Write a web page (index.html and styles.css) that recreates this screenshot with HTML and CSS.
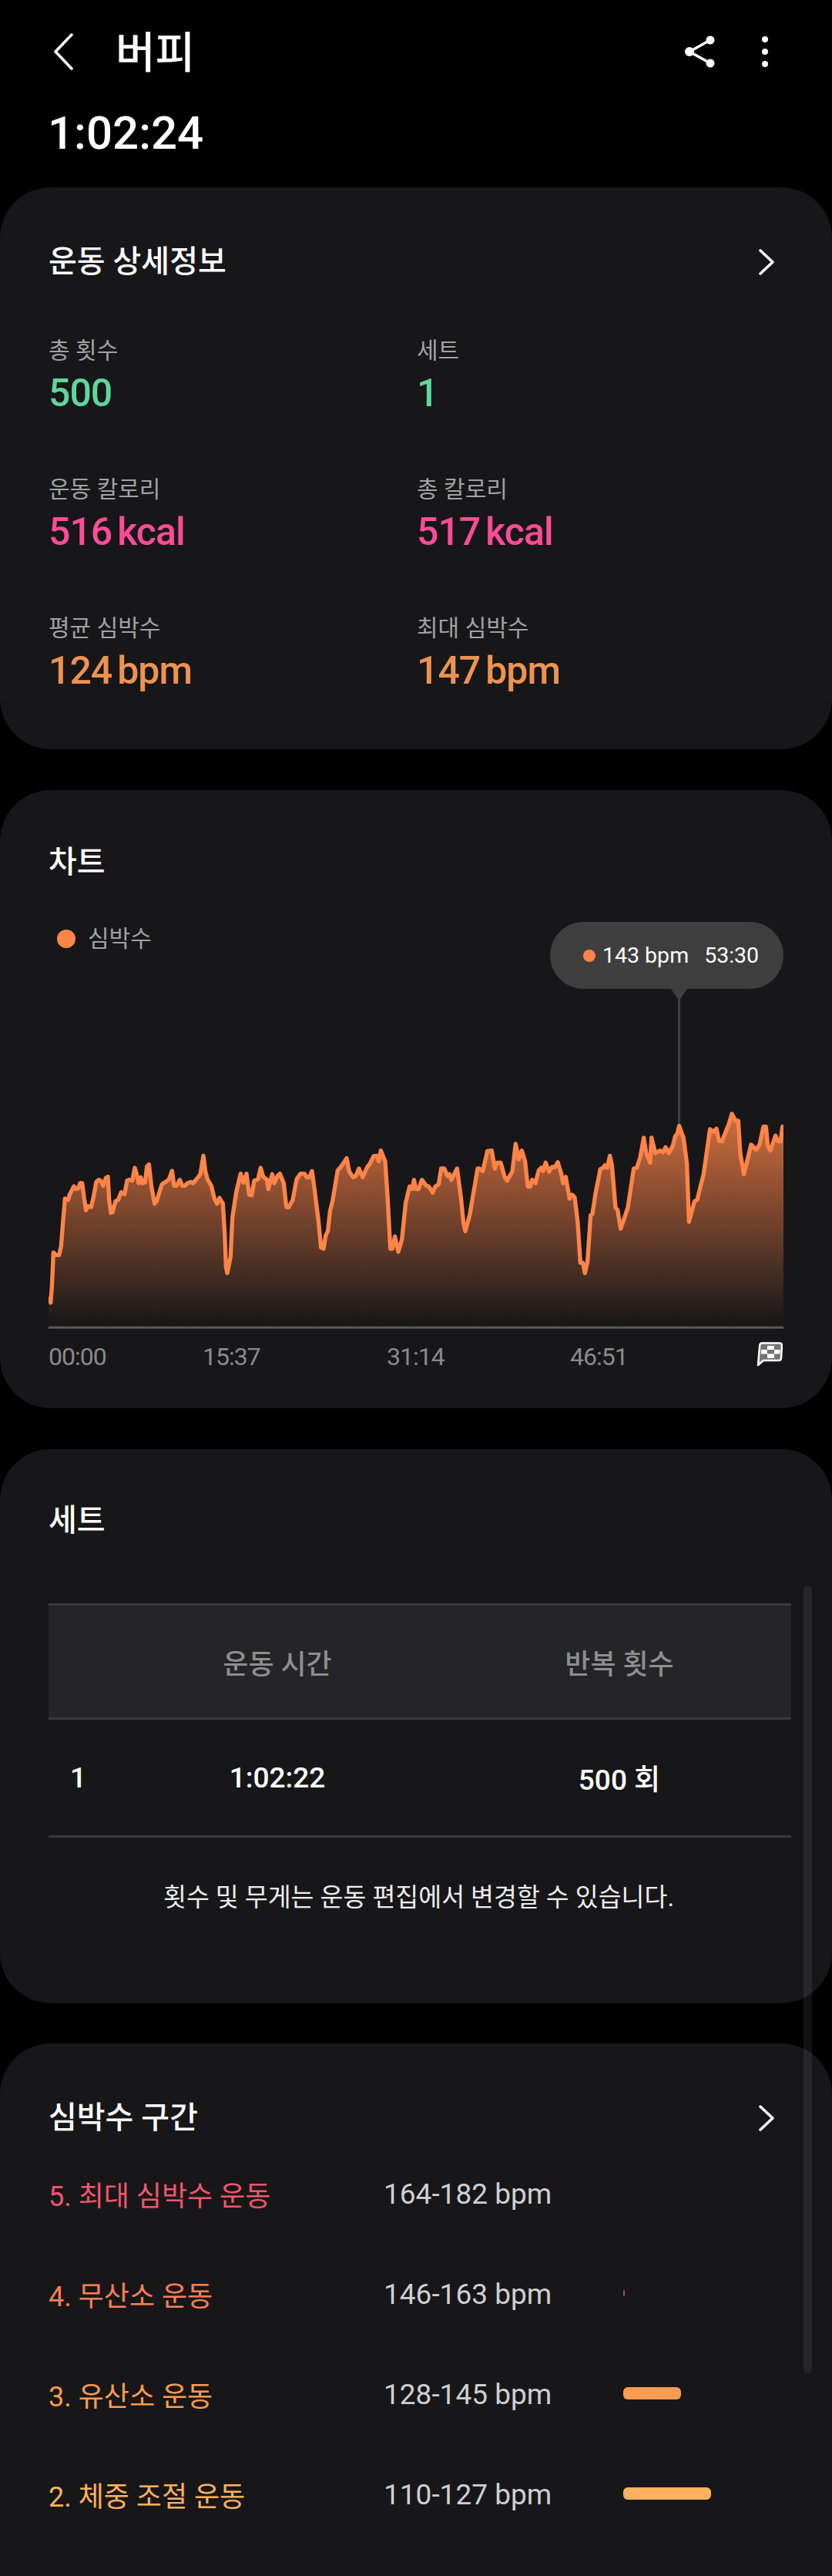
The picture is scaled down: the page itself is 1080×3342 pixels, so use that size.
FILE: index.html
```html
<!DOCTYPE html>
<html lang="ko">
<head>
  <meta charset="UTF-8">
  <title>버피</title>
  <link rel="stylesheet" href="styles.css">
</head>
<body>
  <header class="top">
    <div class="top-row">
      <svg class="back" width="26" height="50" viewBox="0 0 26 50"><polyline points="24,3 3,25 24,47"/></svg>
      <h1>버피</h1>
      <svg class="share" width="44" height="44" viewBox="0 0 44 44">
        <polyline points="33,7 6,22 33,37"/>
        <circle cx="33" cy="7" r="5.5"/><circle cx="6" cy="22" r="6"/><circle cx="33" cy="37" r="5.5"/>
      </svg>
      <svg class="more" width="10" height="44" viewBox="0 0 10 44">
        <circle cx="5" cy="6" r="4"/><circle cx="5" cy="22" r="4"/><circle cx="5" cy="38" r="4"/>
      </svg>
    </div>
    <div class="duration">1:02:24</div>
  </header>

  <section class="card card-detail">
    <div class="card-title">
      <h2>운동 상세정보</h2>
      <svg class="chevron" width="20" height="34" viewBox="0 0 20 34"><polyline points="2,2 18,17 2,32"/></svg>
    </div>
    <div class="stats">
      <div class="stat"><div class="stat-label">총 횟수</div><div class="stat-value green">500</div></div>
      <div class="stat"><div class="stat-label">세트</div><div class="stat-value green">1</div></div>
      <div class="stat"><div class="stat-label">운동 칼로리</div><div class="stat-value pink">516<span class="unit">kcal</span></div></div>
      <div class="stat"><div class="stat-label">총 칼로리</div><div class="stat-value pink">517<span class="unit">kcal</span></div></div>
      <div class="stat"><div class="stat-label">평균 심박수</div><div class="stat-value orange">124<span class="unit">bpm</span></div></div>
      <div class="stat"><div class="stat-label">최대 심박수</div><div class="stat-value orange">147<span class="unit">bpm</span></div></div>
    </div>
  </section>

  <section class="card card-chart">
    <div class="card-title"><h2>차트</h2></div>
    <div class="legend"><span class="dot"></span>심박수</div>

    <div class="tooltip">
      <span class="tooltip-dot"></span><span>143 bpm</span><span class="tooltip-time">53:30</span>
    </div>
    <div class="marker-line"></div>

    <svg class="plot" width="954" height="284" viewBox="9 0 2862 852">
      <defs>
        <linearGradient id="hrfill" gradientUnits="userSpaceOnUse" x1="0" y1="0" x2="0" y2="840">
          <stop offset="0" stop-color="#ff8448" stop-opacity="0.82"/>
          <stop offset="1" stop-color="#ff8448" stop-opacity="0"/>
        </linearGradient>
      </defs>
      <polygon class="plot-area" points="9,840 9,735 12,735 17,750 22,690 28,555 38,565 50,565 58,530 65,440 73,345 85,350 92,328 108,297 115,308 125,305 132,285 140,285 147,340 155,390 163,375 175,378 185,335 195,280 205,272 212,275 222,295 232,265 240,260 245,350 252,400 258,398 270,355 280,350 292,320 305,328 315,275 325,272 335,275 345,225 352,250 360,285 368,262 375,285 385,282 392,220 400,212 410,300 422,365 430,355 450,290 465,280 478,270 490,237 498,295 508,295 520,272 530,295 540,295 550,285 565,280 572,285 585,270 600,250 612,178 620,240 628,270 643,295 655,345 665,365 675,342 688,365 695,480 700,610 705,635 718,570 725,420 740,320 757,248 768,283 780,248 790,330 800,332 810,275 825,270 835,225 845,260 860,272 865,308 880,250 888,285 900,258 910,248 925,285 935,378 945,378 960,350 975,270 990,248 1005,248 1015,262 1025,262 1035,238 1045,310 1060,430 1070,535 1080,540 1088,490 1097,470 1105,395 1115,355 1135,235 1145,225 1170,188 1180,240 1195,262 1205,258 1218,228 1232,262 1250,222 1260,210 1275,180 1288,178 1295,200 1303,158 1320,200 1330,350 1340,540 1348,540 1358,492 1371,552 1385,505 1400,360 1415,298 1425,308 1432,272 1440,308 1450,308 1463,272 1478,293 1490,298 1505,322 1515,298 1528,290 1538,228 1550,228 1563,258 1570,250 1578,272 1600,228 1615,340 1625,440 1632,472 1650,405 1680,228 1687,228 1700,238 1718,160 1735,158 1747,228 1755,205 1770,205 1785,260 1795,275 1802,262 1815,240 1828,132 1840,192 1852,158 1865,200 1875,298 1885,298 1892,272 1905,285 1918,235 1928,225 1935,238 1945,205 1958,240 1970,222 1982,222 1992,203 2005,245 2013,285 2023,260 2038,345 2048,330 2058,340 2070,440 2080,595 2090,595 2098,635 2108,590 2120,410 2127,405 2140,320 2158,230 2170,225 2175,215 2185,225 2195,178 2203,215 2217,380 2225,390 2237,462 2250,425 2265,380 2288,228 2300,225 2313,185 2327,108 2337,170 2352,205 2357,108 2372,168 2390,158 2402,165 2412,145 2425,168 2440,140 2450,100 2457,95 2465,62 2482,110 2495,210 2503,435 2515,390 2525,355 2535,350 2560,250 2585,75 2598,85 2610,73 2620,120 2632,122 2642,95 2660,50 2670,15 2685,42 2695,42 2703,170 2717,250 2745,135 2765,155 2778,135 2793,65 2803,65 2810,140 2820,158 2840,100 2850,122 2860,122 2867,65 2871,65 2871,840"/>
      <polyline class="plot-line" points="12,735 17,750 22,690 28,555 38,565 50,565 58,530 65,440 73,345 85,350 92,328 108,297 115,308 125,305 132,285 140,285 147,340 155,390 163,375 175,378 185,335 195,280 205,272 212,275 222,295 232,265 240,260 245,350 252,400 258,398 270,355 280,350 292,320 305,328 315,275 325,272 335,275 345,225 352,250 360,285 368,262 375,285 385,282 392,220 400,212 410,300 422,365 430,355 450,290 465,280 478,270 490,237 498,295 508,295 520,272 530,295 540,295 550,285 565,280 572,285 585,270 600,250 612,178 620,240 628,270 643,295 655,345 665,365 675,342 688,365 695,480 700,610 705,635 718,570 725,420 740,320 757,248 768,283 780,248 790,330 800,332 810,275 825,270 835,225 845,260 860,272 865,308 880,250 888,285 900,258 910,248 925,285 935,378 945,378 960,350 975,270 990,248 1005,248 1015,262 1025,262 1035,238 1045,310 1060,430 1070,535 1080,540 1088,490 1097,470 1105,395 1115,355 1135,235 1145,225 1170,188 1180,240 1195,262 1205,258 1218,228 1232,262 1250,222 1260,210 1275,180 1288,178 1295,200 1303,158 1320,200 1330,350 1340,540 1348,540 1358,492 1371,552 1385,505 1400,360 1415,298 1425,308 1432,272 1440,308 1450,308 1463,272 1478,293 1490,298 1505,322 1515,298 1528,290 1538,228 1550,228 1563,258 1570,250 1578,272 1600,228 1615,340 1625,440 1632,472 1650,405 1680,228 1687,228 1700,238 1718,160 1735,158 1747,228 1755,205 1770,205 1785,260 1795,275 1802,262 1815,240 1828,132 1840,192 1852,158 1865,200 1875,298 1885,298 1892,272 1905,285 1918,235 1928,225 1935,238 1945,205 1958,240 1970,222 1982,222 1992,203 2005,245 2013,285 2023,260 2038,345 2048,330 2058,340 2070,440 2080,595 2090,595 2098,635 2108,590 2120,410 2127,405 2140,320 2158,230 2170,225 2175,215 2185,225 2195,178 2203,215 2217,380 2225,390 2237,462 2250,425 2265,380 2288,228 2300,225 2313,185 2327,108 2337,170 2352,205 2357,108 2372,168 2390,158 2402,165 2412,145 2425,168 2440,140 2450,100 2457,95 2465,62 2482,110 2495,210 2503,435 2515,390 2525,355 2535,350 2560,250 2585,75 2598,85 2610,73 2620,120 2632,122 2642,95 2660,50 2670,15 2685,42 2695,42 2703,170 2717,250 2745,135 2765,155 2778,135 2793,65 2803,65 2810,140 2820,158 2840,100 2850,122 2860,122 2867,65"/>
      <line class="plot-base" x1="9" y1="847" x2="2871" y2="847"/>
    </svg>

    <div class="axis">
      <span>00:00</span><span>15:37</span><span>31:14</span><span>46:51</span>
      <svg class="flag" width="34" height="32" viewBox="0 0 34 32">
        <path class="flag-body" d="M7 1.5H30Q33 1.5 33 4.5L32 21Q31.8 24 29 24H9L2 30L4.2 4.5Q4.5 1.5 7 1.5Z"/>
        <path class="flag-check" d="M14 5H23V10H14ZM6 10H14V15.5H6ZM23 10H30.5V15.5H23ZM14 15.5H23V21H14Z"/>
      </svg>
    </div>
  </section>

  <section class="card card-sets">
    <div class="card-title"><h2>세트</h2></div>
    <table class="set-table">
      <tr class="set-head"><th></th><th>운동 시간</th><th>반복 횟수</th></tr>
      <tr class="set-row"><td class="set-no">1</td><td>1:02:22</td><td>500 회</td></tr>
    </table>
    <p class="set-note">횟수 및 무게는 운동 편집에서 변경할 수 있습니다.</p>
  </section>

  <section class="card card-zones">
    <div class="card-title">
      <h2>심박수 구간</h2>
      <svg class="chevron" width="20" height="34" viewBox="0 0 20 34"><polyline points="2,2 18,17 2,32"/></svg>
    </div>
    <div class="zone z5"><span class="zone-name">5. 최대 심박수 운동</span><span class="zone-range">164-182 bpm</span><span></span></div>
    <div class="zone z4"><span class="zone-name">4. 무산소 운동</span><span class="zone-range">146-163 bpm</span><span class="zone-bar" style="width:2px;height:8px"></span></div>
    <div class="zone z3"><span class="zone-name">3. 유산소 운동</span><span class="zone-range">128-145 bpm</span><span class="zone-bar" style="width:75px"></span></div>
    <div class="zone z2"><span class="zone-name">2. 체중 조절 운동</span><span class="zone-range">110-127 bpm</span><span class="zone-bar" style="width:114px"></span></div>
  </section>

  <div class="scrollbar"></div>
</body>
</html>
```

FILE: styles.css
```css
html, body{
  margin: 0;
  padding: 0;
}
body{
  position: relative;
  width: 1080px;
  height: 3342px;
  overflow: hidden;
  background-color: #000;
  color: #fff;
  font-family: Roboto, "Noto Sans CJK KR", sans-serif;
}
h1, h2, p{
  margin: 0;
}

/* header */
.top{
  height: 243px;
  padding: 34px 82px 0 69px;
  box-sizing: border-box;
}
.top-row{
  display: flex;
  align-items: center;
  height: 66px;
}
.back{
  margin-right: 55px;
}
.back polyline, .chevron polyline{
  fill: none;
  stroke: #fff;
  stroke-width: 3.5;
  stroke-linecap: round;
  stroke-linejoin: round;
}
h1{
  font-size: 56px;
  font-weight: 500;
  line-height: 66px;
  position: relative;
  top: 2px;
}
.share{
  margin-left: auto;
  margin-right: 55px;
}
.share polyline{
  fill: none;
  stroke: #fff;
  stroke-width: 3.5;
}
.share circle, .more circle{
  fill: #fff;
}
.duration{
  margin: 38px 0 0 -7px;
  font-size: 60px;
  font-weight: 500;
  line-height: 70px;
}

/* cards */
.card{
  position: relative;
  background-color: #171719;
  border-radius: 66px;
  padding: 0 63px;
  box-sizing: border-box;
  margin-bottom: 53px;
}
.card-title{
  display: flex;
  align-items: center;
  justify-content: space-between;
  height: 60px;
}
.card-title .chevron{
  margin-right: 12px;
}
h2{
  font-size: 40px;
  font-weight: 500;
  line-height: 60px;
}

/* details */
.card-detail{
  height: 729px;
  padding-top: 67px;
}
.stats{
  display: grid;
  grid-template-columns: 478px 1fr;
  row-gap: 70px;
  margin-top: 65px;
}
.stat-label{
  font-size: 30px;
  line-height: 40px;
  color: #a2a2a4;
}
.stat-value{
  font-size: 50px;
  font-weight: 500;
  line-height: 70px;
  letter-spacing: -1px;
}
.unit{
  margin-left: 7px;
}
.green{ color: #5fd79b; }
.pink{ color: #fb4c96; }
.orange{ color: #ee9251; }

/* chart */
.card-chart{
  height: 802px;
  padding-top: 64px;
}
.legend{
  display: flex;
  align-items: center;
  margin: 49px 0 0 11px;
  font-size: 30px;
  line-height: 40px;
  color: #a2a2a4;
}
.dot{
  width: 24px;
  height: 24px;
  border-radius: 50%;
  background-color: #ff8448;
  margin-right: 16px;
}
.tooltip{
  position: absolute;
  top: 171px;
  right: 63px;
  display: flex;
  align-items: center;
  width: 303px;
  height: 87px;
  padding-left: 43px;
  box-sizing: border-box;
  border-radius: 44px;
  background-color: #3f3f3f;
  font-size: 28.5px;
}
.tooltip::after{
  content: "";
  position: absolute;
  left: 157px;
  top: 87px;
  width: 21px;
  height: 15px;
  background-color: #3f3f3f;
  clip-path: polygon(0 0, 100% 0, 50% 100%);
}
.tooltip-dot{
  width: 16px;
  height: 16px;
  border-radius: 50%;
  background-color: #ff8448;
  margin-right: 9px;
}
.tooltip-time{
  margin-left: 20px;
}
.marker-line{
  position: absolute;
  left: 880px;
  top: 270px;
  width: 3px;
  height: 170px;
  background-color: #3f3f3f;
}
.plot{
  position: relative;
  display: block;
  margin-top: 202px;
}
.plot-area{
  fill: url(#hrfill);
}
.plot-line{
  fill: none;
  stroke: #ff8448;
  stroke-width: 16;
  stroke-linejoin: round;
  stroke-linecap: round;
}
.plot-base{
  stroke: #5c5c5e;
  stroke-width: 9;
}
.axis{
  display: grid;
  grid-template-columns: 200px 239px 238px 243px 1fr;
  align-items: center;
  margin-top: 16px;
  height: 40px;
  font-size: 32px;
  letter-spacing: -1px;
  color: #8a8a8c;
}
.flag{
  margin-left: -1px;
  margin-top: -6px;
}
.flag-body{
  fill: #757575;
  stroke: #fff;
  stroke-width: 2.5;
  stroke-linejoin: round;
}
.flag-check{
  fill: #fff;
}

/* sets */
.card-sets{
  height: 719px;
  padding-top: 63px;
}
.set-table{
  width: 964px;
  margin-top: 77px;
  border-collapse: collapse;
  table-layout: fixed;
}
.set-head th:nth-child(1){ width: 76px; }
.set-head th:nth-child(2){ width: 442px; }
.set-head{
  height: 148px;
  background-color: #252527;
  border-top: 3px solid #3a3a3c;
  border-bottom: 3px solid #3a3a3c;
}
.set-head th{
  font-size: 36px;
  font-weight: 500;
  color: #8e8e90;
  text-align: center;
  padding: 0;
}
.set-row{
  height: 153px;
  border-bottom: 3px solid #3a3a3c;
}
.set-row td{
  font-size: 37px;
  font-weight: 500;
  text-align: center;
  padding: 0;
}
.set-row .set-no{
  text-align: left;
  padding-left: 28px;
}
.set-note{
  margin-top: 48px;
  margin-left: 7px;
  font-size: 32.5px;
  line-height: 60px;
  text-align: center;
  color: #eee;
}

/* zones */
.card-zones{
  height: 693px;
  margin-top: -1px;
  padding-top: 67px;
  margin-bottom: 0;
  border-radius: 66px 66px 0 0;
}
.card-zones .card-title{
  margin-bottom: 3px;
}
.zone{
  display: grid;
  grid-template-columns: 435px 311px 1fr;
  align-items: center;
  height: 130px;
  font-size: 36px;
}
.zone-range{
  font-size: 37px;
  color: #cfcfd1;
}
.zone-bar{
  display: block;
  height: 16px;
  border-radius: 6px;
  margin-top: -3px;
}
.z5 .zone-name{ color: #f0566c; }
.z4 .zone-name{ color: #fb7f55; }
.z3 .zone-name{ color: #fd9b50; }
.z2 .zone-name{ color: #ffb060; }
.z4 .zone-bar{ background-color: #a8484a; }
.z3 .zone-bar{ background-color: #fd9b50; }
.z2 .zone-bar{ background-color: #ffb060; }

.scrollbar{
  position: absolute;
  top: 2057px;
  right: 26px;
  width: 11px;
  height: 1022px;
  border-radius: 6px;
  background-color: rgba(255, 255, 255, 0.07);
}
```
